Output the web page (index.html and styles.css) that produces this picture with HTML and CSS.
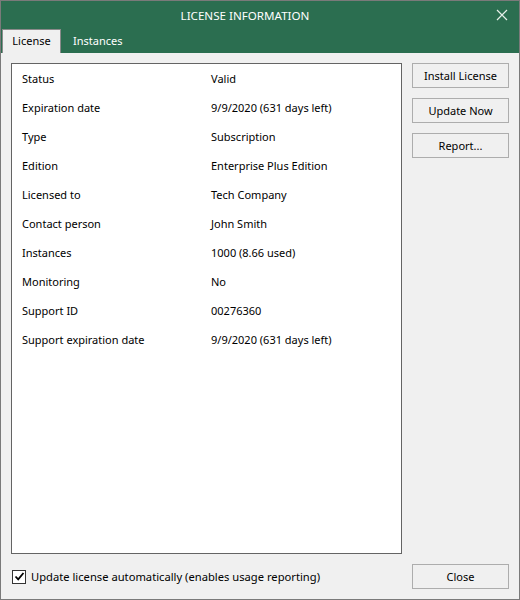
FILE: index.html
```html
<!DOCTYPE html>
<html>
<head>
<meta charset="utf-8">
<link rel="stylesheet" href="styles.css">
</head>
<body>
<div class="window">
  <div class="titlebar">
    <div class="title-row">
      <span class="title">LICENSE INFORMATION</span>
      <svg class="close-x" width="12" height="12" viewBox="0 0 12 12"><path d="M1 1L11 11M11 1L1 11" stroke="#e6efe9" stroke-width="1.2" fill="none"/></svg>
    </div>
    <div class="tabs">
      <div class="tab active">License</div>
      <div class="tab">Instances</div>
    </div>
  </div>
  <div class="content">
    <div class="main">
      <div class="panel">
        <div class="row"><span class="label">Status</span><span class="value">Valid</span></div>
        <div class="row"><span class="label">Expiration date</span><span class="value">9/9/2020 (631 days left)</span></div>
        <div class="row"><span class="label">Type</span><span class="value">Subscription</span></div>
        <div class="row"><span class="label">Edition</span><span class="value">Enterprise Plus Edition</span></div>
        <div class="row"><span class="label">Licensed to</span><span class="value">Tech Company</span></div>
        <div class="row"><span class="label">Contact person</span><span class="value">John Smith</span></div>
        <div class="row"><span class="label">Instances</span><span class="value">1000 (8.66 used)</span></div>
        <div class="row"><span class="label">Monitoring</span><span class="value">No</span></div>
        <div class="row"><span class="label">Support ID</span><span class="value">00276360</span></div>
        <div class="row"><span class="label">Support expiration date</span><span class="value">9/9/2020 (631 days left)</span></div>
      </div>
      <div class="side">
        <button class="btn">Install License</button>
        <button class="btn">Update Now</button>
        <button class="btn">Report...</button>
      </div>
    </div>
    <div class="footer">
      <label class="check">
        <span class="box"><svg width="11" height="11" viewBox="0 0 11 11"><path d="M1.5 5.5L4.2 8.3L9.5 2" stroke="#000" stroke-width="1.8" fill="none"/></svg></span>
        <span class="check-text">Update license automatically (enables usage reporting)</span>
      </label>
      <button class="btn">Close</button>
    </div>
  </div>
</div>
</body>
</html>
```
FILE: styles.css
```css
* { box-sizing: border-box; }
html, body { margin: 0; padding: 0; }
body {
  font-family: "Noto Sans", "Open Sans", sans-serif;
  font-size: 11px;
  color: #000;
  background: #f0f0f0;
}
.window {
  width: 520px;
  height: 600px;
  border: 1px solid #7a7a7a;
  display: flex;
  flex-direction: column;
  background: #f0f0f0;
}
.titlebar {
  background: #2b6e50;
  height: 52px;
  display: flex;
  flex-direction: column;
}
.title-row {
  height: 28px;
  display: flex;
  align-items: center;
  justify-content: center;
  position: relative;
}
.title {
  color: #fff;
  font-size: 11.6px;
  margin-left: -30px;
}
.close-x {
  position: absolute;
  right: 11px;
  top: 8px;
}
.tabs {
  flex: 1;
  display: flex;
  align-items: flex-end;
  padding-left: 1px;
}
.tab {
  height: 23px;
  line-height: 22px;
  padding: 0 12px;
  color: #fff;
}
.tab.active {
  background: #f0f0f0;
  color: #000;
  border: 1px solid #8a8a8a;
  border-bottom: none;
  width: 59px;
  height: 24px;
  padding: 0;
  text-align: center;
}
.content {
  flex: 1;
  display: flex;
  flex-direction: column;
  padding: 10px 10px 10px 10px;
}
.main {
  display: flex;
  gap: 10px;
}
.panel {
  width: 391px;
  height: 491px;
  background: #fff;
  border: 1px solid #646464;
  padding: 0 0 0 10px;
}
.row {
  display: flex;
  height: 29px;
  align-items: center;
}
.label { width: 189px; }
.side {
  display: flex;
  flex-direction: column;
  gap: 10px;
}
.btn {
  width: 97px;
  height: 25px;
  background: #f0f0f0;
  border: 1px solid #adadad;
  font-family: inherit;
  font-size: 11px;
  color: #000;
  padding: 0;
}
.footer {
  display: flex;
  align-items: center;
  justify-content: space-between;
  margin-top: 10px;
}
.check {
  display: flex;
  align-items: center;
  gap: 5px;
  padding-left: 1px;
}
.check-text { font-size: 11.2px; }
.box {
  width: 14px;
  height: 14px;
  border: 1px solid #333;
  background: #fff;
  display: flex;
  align-items: center;
  justify-content: center;
}
```
